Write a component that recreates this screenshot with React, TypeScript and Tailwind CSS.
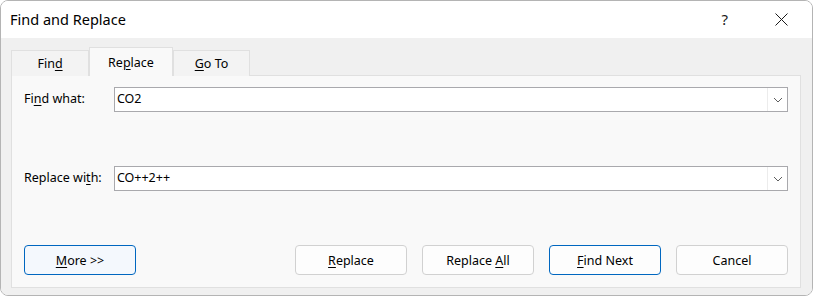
import React from 'react'

const font = { fontFamily: '"Noto Sans", "Open Sans", sans-serif' }

function U({ children }: { children: React.ReactNode }) {
  return <span className="underline underline-offset-[2px] decoration-1">{children}</span>
}

function Chevron() {
  return (
    <svg width="10" height="6" viewBox="0 0 10 6" fill="none">
      <path d="M1 1 L5 5 L9 1" stroke="#5f5f5f" strokeWidth="1" />
    </svg>
  )
}

function ComboBox({ value }: { value: string }) {
  return (
    <div className="flex h-[25px] w-[675px] border border-[#a9a9ad] bg-white">
      <div className="flex flex-1 items-center pl-[2px] text-[12.5px] text-black">{value}</div>
      <div className="flex w-[20px] items-center justify-center border-l border-[#ececec]">
        <Chevron />
      </div>
    </div>
  )
}

function Button({ children, variant = 'normal' }: { children: React.ReactNode; variant?: 'normal' | 'default' | 'hover' }) {
  const cls =
    variant === 'default'
      ? 'border-[#0067c0] bg-[#fdfdfd]'
      : variant === 'hover'
      ? 'border-[#0067c0] bg-[#f4f8fd]'
      : 'border-[#d1d1d1] bg-[#fdfdfd]'
  return (
    <button className={`flex h-[30px] w-[112px] items-center justify-center rounded-[4px] border pt-[2px] text-[12.5px] text-black ${cls}`}>
      <span>{children}</span>
    </button>
  )
}

export default function App() {
  return (
    <div className="h-[297px] w-[813px] bg-white" style={font}>
      <div className="flex h-[296px] w-[813px] flex-col overflow-hidden rounded-[8px] border border-[#b4b4b4]">
        {/* Title bar */}
        <div className="flex h-[37px] items-center bg-white pl-[9px]">
          <span className="text-[14.5px] text-black">Find and Replace</span>
          <div className="ml-auto flex items-center">
            <span className="mr-[47px] text-[15px] text-[#1a1a1a]">?</span>
            <svg width="13" height="13" viewBox="0 0 13 13" className="mr-[24px]">
              <path d="M0.5 0.5 L12.5 12.5 M12.5 0.5 L0.5 12.5" stroke="#1a1a1a" strokeWidth="1" />
            </svg>
          </div>
        </div>

        {/* Body */}
        <div className="flex flex-1 flex-col bg-[#f0f0f0] pl-[10px] pr-[11px] pt-[9px]">
          {/* Tabs */}
          <div className="relative z-10 -mb-px flex h-[29px] items-end text-[12.5px] text-black">
            <div className="flex h-[26px] w-[78px] items-center justify-center border border-b-0 border-[#e0e0e0] bg-[#f3f3f3] pt-px">
              <span>Fin<U>d</U></span>
            </div>
            <div className="flex h-[29px] w-[84px] items-center justify-center border border-b-0 border-[#e0e0e0] bg-[#f9f9f9] pt-[3px]">
              <span>Re<U>p</U>lace</span>
            </div>
            <div className="flex h-[26px] w-[77px] items-center justify-center border border-b-0 border-[#e0e0e0] bg-[#f3f3f3] pt-px">
              <span><U>G</U>o To</span>
            </div>
          </div>

          {/* Panel */}
          <div className="flex h-[213px] w-[790px] flex-col border border-[#e0e0e0] bg-[#f9f9f9] pl-[12px] pr-[12px] pt-[11px] text-[12.5px] text-black">
            <div className="flex items-center">
              <div className="w-[90px]">
                Fi<U>n</U>d what:
              </div>
              <ComboBox value="CO2" />
            </div>
            <div className="mt-[54px] flex items-center">
              <div className="w-[90px]">
                Replace wi<U>t</U>h:
              </div>
              <ComboBox value="CO++2++" />
            </div>
            <div className="mt-[54px] flex items-center">
              <Button variant="hover">
                <U>M</U>ore &gt;&gt;
              </Button>
              <div className="ml-auto flex gap-[15px]">
                <Button>
                  <U>R</U>eplace
                </Button>
                <Button>
                  Replace <U>A</U>ll
                </Button>
                <Button variant="default">
                  <U>F</U>ind Next
                </Button>
                <Button>Cancel</Button>
              </div>
            </div>
          </div>
        </div>
      </div>
    </div>
  )
}
